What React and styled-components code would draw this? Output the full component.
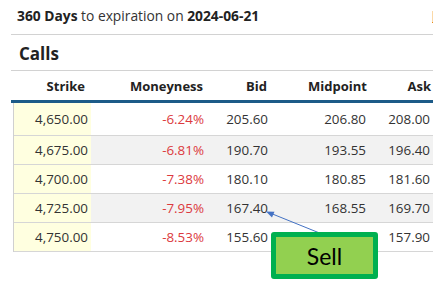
import styled, { createGlobalStyle } from "styled-components";

const GlobalStyle = createGlobalStyle`
  body {
    margin: 0;
    background: #ffffff;
    font-family: "Open Sans", "DejaVu Sans", sans-serif;
  }
`;

const PageStyled = styled.div`
  position: relative;
  width: 433px;
  height: 283px;
  overflow: hidden;
  background: #ffffff;
`;

const ExpiryBarStyled = styled.div`
  display: flex;
  align-items: center;
  justify-content: space-between;
  height: 35px;
  box-sizing: border-box;
  margin-left: 11px;
  padding: 0 0 3px 6px;
  border-bottom: 1px solid #d2d2d2;
  font-size: 13.8px;
  color: #333333;

  b {
    font-weight: 700;
    color: #222222;
  }
`;

const MarkerStyled = styled.span`
  width: 1px;
  height: 11px;
  margin-top: 3px;
  background: #fbd9a8;
  border-bottom: 1px solid #e88a1a;
`;

const SectionTitleStyled = styled.h2`
  display: flex;
  align-items: center;
  height: 36px;
  margin: 0 0 0 11px;
  padding: 1px 0 0 8px;
  box-sizing: border-box;
  border-bottom: 1px solid #d2d2d2;
  font-size: 17px;
  font-weight: 700;
  color: #222222;
`;

const columns = "77px 116px 64px 98px 64px 80px";

const HeaderRowStyled = styled.div`
  display: grid;
  grid-template-columns: 80px 116px 64px 98px 64px 80px;
  height: 29px;
  margin-left: 11px;
  align-items: center;
  border-bottom: 3px solid #1d5b88;
  font-size: 13px;
  font-weight: 700;
  color: #222222;
`;

const HeadCellStyled = styled.div`
  text-align: right;
  padding-right: ${(props) => props.pad}px;
  white-space: nowrap;
`;

const BodyStyled = styled.div`
  margin-left: 13px;
  border-left: 1px solid #d0d0d0;
  width: 600px;
`;

const RowStyled = styled.div`
  display: grid;
  grid-template-columns: ${columns};
  height: ${(props) => (props.first ? 32 : 28)}px;
  border-bottom: 1px solid #d6d6d6;
  background: ${(props) => (props.shaded ? "#f2f2f2" : "#ffffff")};
  font-size: 13.4px;
  color: #333333;
`;

const CellStyled = styled.div`
  display: flex;
  align-items: center;
  justify-content: flex-end;
  padding-right: 3px;
  white-space: nowrap;
  color: ${(props) => (props.negative ? "#dc3a40" : "inherit")};
  background: ${(props) => (props.strike ? "#ffffe0" : "transparent")};
`;

const CalloutStyled = styled.div`
  position: absolute;
  left: 271px;
  top: 232px;
  width: 107px;
  height: 47px;
  box-sizing: border-box;
  display: flex;
  align-items: center;
  justify-content: center;
  border: 5px solid #00b050;
  border-radius: 3px;
  background: #92d050;
  font-family: Lato, "Liberation Sans", sans-serif;
  font-size: 23px;
  color: #000000;
`;

const ArrowStyled = styled.svg`
  position: absolute;
  left: 0;
  top: 0;
  pointer-events: none;
`;

const rows = [
  ["4,650.00", "-6.24%", "205.60", "206.80", "208.00"],
  ["4,675.00", "-6.81%", "190.70", "193.55", "196.40"],
  ["4,700.00", "-7.38%", "180.10", "180.85", "181.60"],
  ["4,725.00", "-7.95%", "167.40", "168.55", "169.70"],
  ["4,750.00", "-8.53%", "155.60", "156.75", "157.90"],
];

const headers = [
  ["Strike", 6],
  ["Moneyness", 4],
  ["Bid", 4],
  ["Midpoint", 2],
  ["Ask", 2],
  ["", 0],
];

export default function App() {
  return (
    <PageStyled>
      <GlobalStyle />
      <ExpiryBarStyled>
        <span>
          <b>360 Days</b> to expiration on <b>2024-06-21</b>
        </span>
        <MarkerStyled />
      </ExpiryBarStyled>

      <SectionTitleStyled>Calls</SectionTitleStyled>

      <HeaderRowStyled>
        {headers.map(([label, pad], i) => (
          <HeadCellStyled key={i} pad={pad}>
            {label}
          </HeadCellStyled>
        ))}
      </HeaderRowStyled>

      <BodyStyled>
        {rows.map((row, i) => (
          <RowStyled key={row[0]} first={i === 0} shaded={i % 2 === 1}>
            <CellStyled strike>{row[0]}</CellStyled>
            <CellStyled negative>{row[1]}</CellStyled>
            <CellStyled>{row[2]}</CellStyled>
            <CellStyled>{row[3]}</CellStyled>
            <CellStyled>{row[4]}</CellStyled>
            <CellStyled />
          </RowStyled>
        ))}
      </BodyStyled>

      <ArrowStyled width="433" height="283" viewBox="0 0 433 283">
        <line x1="322" y1="234" x2="270" y2="213" stroke="#4472c4" strokeWidth="1" />
        <polygon points="266,211.5 274.5,211.8 272,217.6" fill="#4472c4" />
      </ArrowStyled>

      <CalloutStyled>Sell</CalloutStyled>
    </PageStyled>
  );
}
